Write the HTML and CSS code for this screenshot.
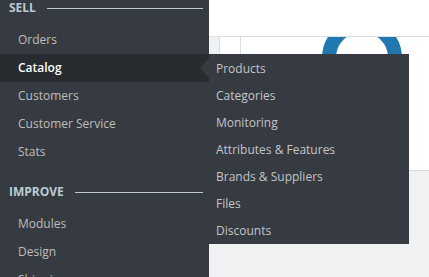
FILE: index.html
```html
<!DOCTYPE html>
<html lang="en">
<head>
  <meta charset="UTF-8">
  <title>Admin Menu</title>
  <meta name="viewport" content="width=device-width, initial-scale=1.0">
  <link rel="stylesheet" href="styles.css">
</head>
<body>
  <nav class="sidebar">
    <div class="menu-title">SELL</div>
    <ul class="menu-list">
      <li class="menu-item">Orders</li>
      <li class="menu-item active">
        Catalog
        <span class="menu-arrow"></span>
        <!-- Flyout for hovered item -->
        <ul class="submenu">
          <li class="submenu-item">Products</li>
          <li class="submenu-item">Categories</li>
          <li class="submenu-item">Monitoring</li>
          <li class="submenu-item">Attributes &amp; Features</li>
          <li class="submenu-item">Brands &amp; Suppliers</li>
          <li class="submenu-item">Files</li>
          <li class="submenu-item">Discounts</li>
        </ul>
      </li>
      <li class="menu-item">Customers</li>
      <li class="menu-item">Customer Service</li>
      <li class="menu-item">Stats</li>
    </ul>
    <div class="menu-title improve">IMPROVE</div>
    <ul class="menu-list">
      <li class="menu-item">Modules</li>
      <li class="menu-item">Design</li>
      <li class="menu-item">Shipping</li>
    </ul>
  </nav>
  <main class="content">
    <header class="top-bar"></header>
    <section class="card">
      <div class="card-gutter"></div>
      <div class="card-body">
        <div class="ring"></div>
      </div>
    </section>
  </main>
</body>
</html>
```

FILE: styles.css
```css
html, body {
  height: 100%;
  margin: 0;
}
body {
  display: flex;
  overflow: hidden;
  font-family: "Open Sans", "Liberation Sans", sans-serif;
  font-size: 12px;
  background: #eff1f2;
}
.sidebar {
  width: 209px;
  flex-shrink: 0;
  height: 100vh;
  background: #363a41;
  position: relative;
  z-index: 2;
}
.menu-title {
  display: flex;
  align-items: center;
  gap: 11px;
  height: 16px;
  line-height: 16px;
  padding: 0 6px 0 9px;
  margin-bottom: 10px;
  color: #bbcdd2;
  font-weight: 700;
  font-size: 12px;
}
.menu-title::after {
  content: "";
  flex: 1;
  height: 1px;
  background: #bbcdd2;
}
.menu-title.improve {
  margin-top: 18px;
}
.menu-list {
  list-style: none;
  margin: 0;
  padding: 0;
}
.menu-item {
  height: 28px;
  line-height: 27px;
  padding-left: 18px;
  color: #bebebe;
  position: relative;
}
.menu-item.active {
  background: #282b30;
  color: #fff;
  font-weight: 600;
}
.menu-arrow {
  position: absolute;
  right: 0;
  top: 4px;
  width: 0;
  height: 0;
  border-top: 10px solid transparent;
  border-bottom: 10px solid transparent;
  border-right: 9px solid #363a41;
}
/* Flyout submenu */
.submenu {
  position: absolute;
  left: 209px;
  top: 0;
  width: 200px;
  list-style: none;
  margin: 0;
  padding: 1px 0 0 0;
  background: #363a41;
  font-weight: 400;
}
.submenu-item {
  height: 27px;
  line-height: 27px;
  padding-left: 7px;
  color: #c3c6cb;
  white-space: nowrap;
}
/* Page behind the menu */
.content {
  flex: 1;
  min-width: 0;
}
.top-bar {
  height: 36px;
  background: #fff;
  border-bottom: 1px solid #dcdfe1;
}
.card {
  display: flex;
  height: 133px;
  margin-left: 10px;
  background: #fff;
  border-left: 1px solid #dcdfe1;
  border-bottom: 1px solid #d6dadc;
  overflow: hidden;
}
.card-gutter {
  width: 20px;
  border-right: 1px solid #dcdfe1;
}
.card-body {
  flex: 1;
}
.ring {
  width: 52px;
  height: 52px;
  border: 14px solid #2178b0;
  border-radius: 50%;
  margin: -19px 0 0 81px;
}
```
